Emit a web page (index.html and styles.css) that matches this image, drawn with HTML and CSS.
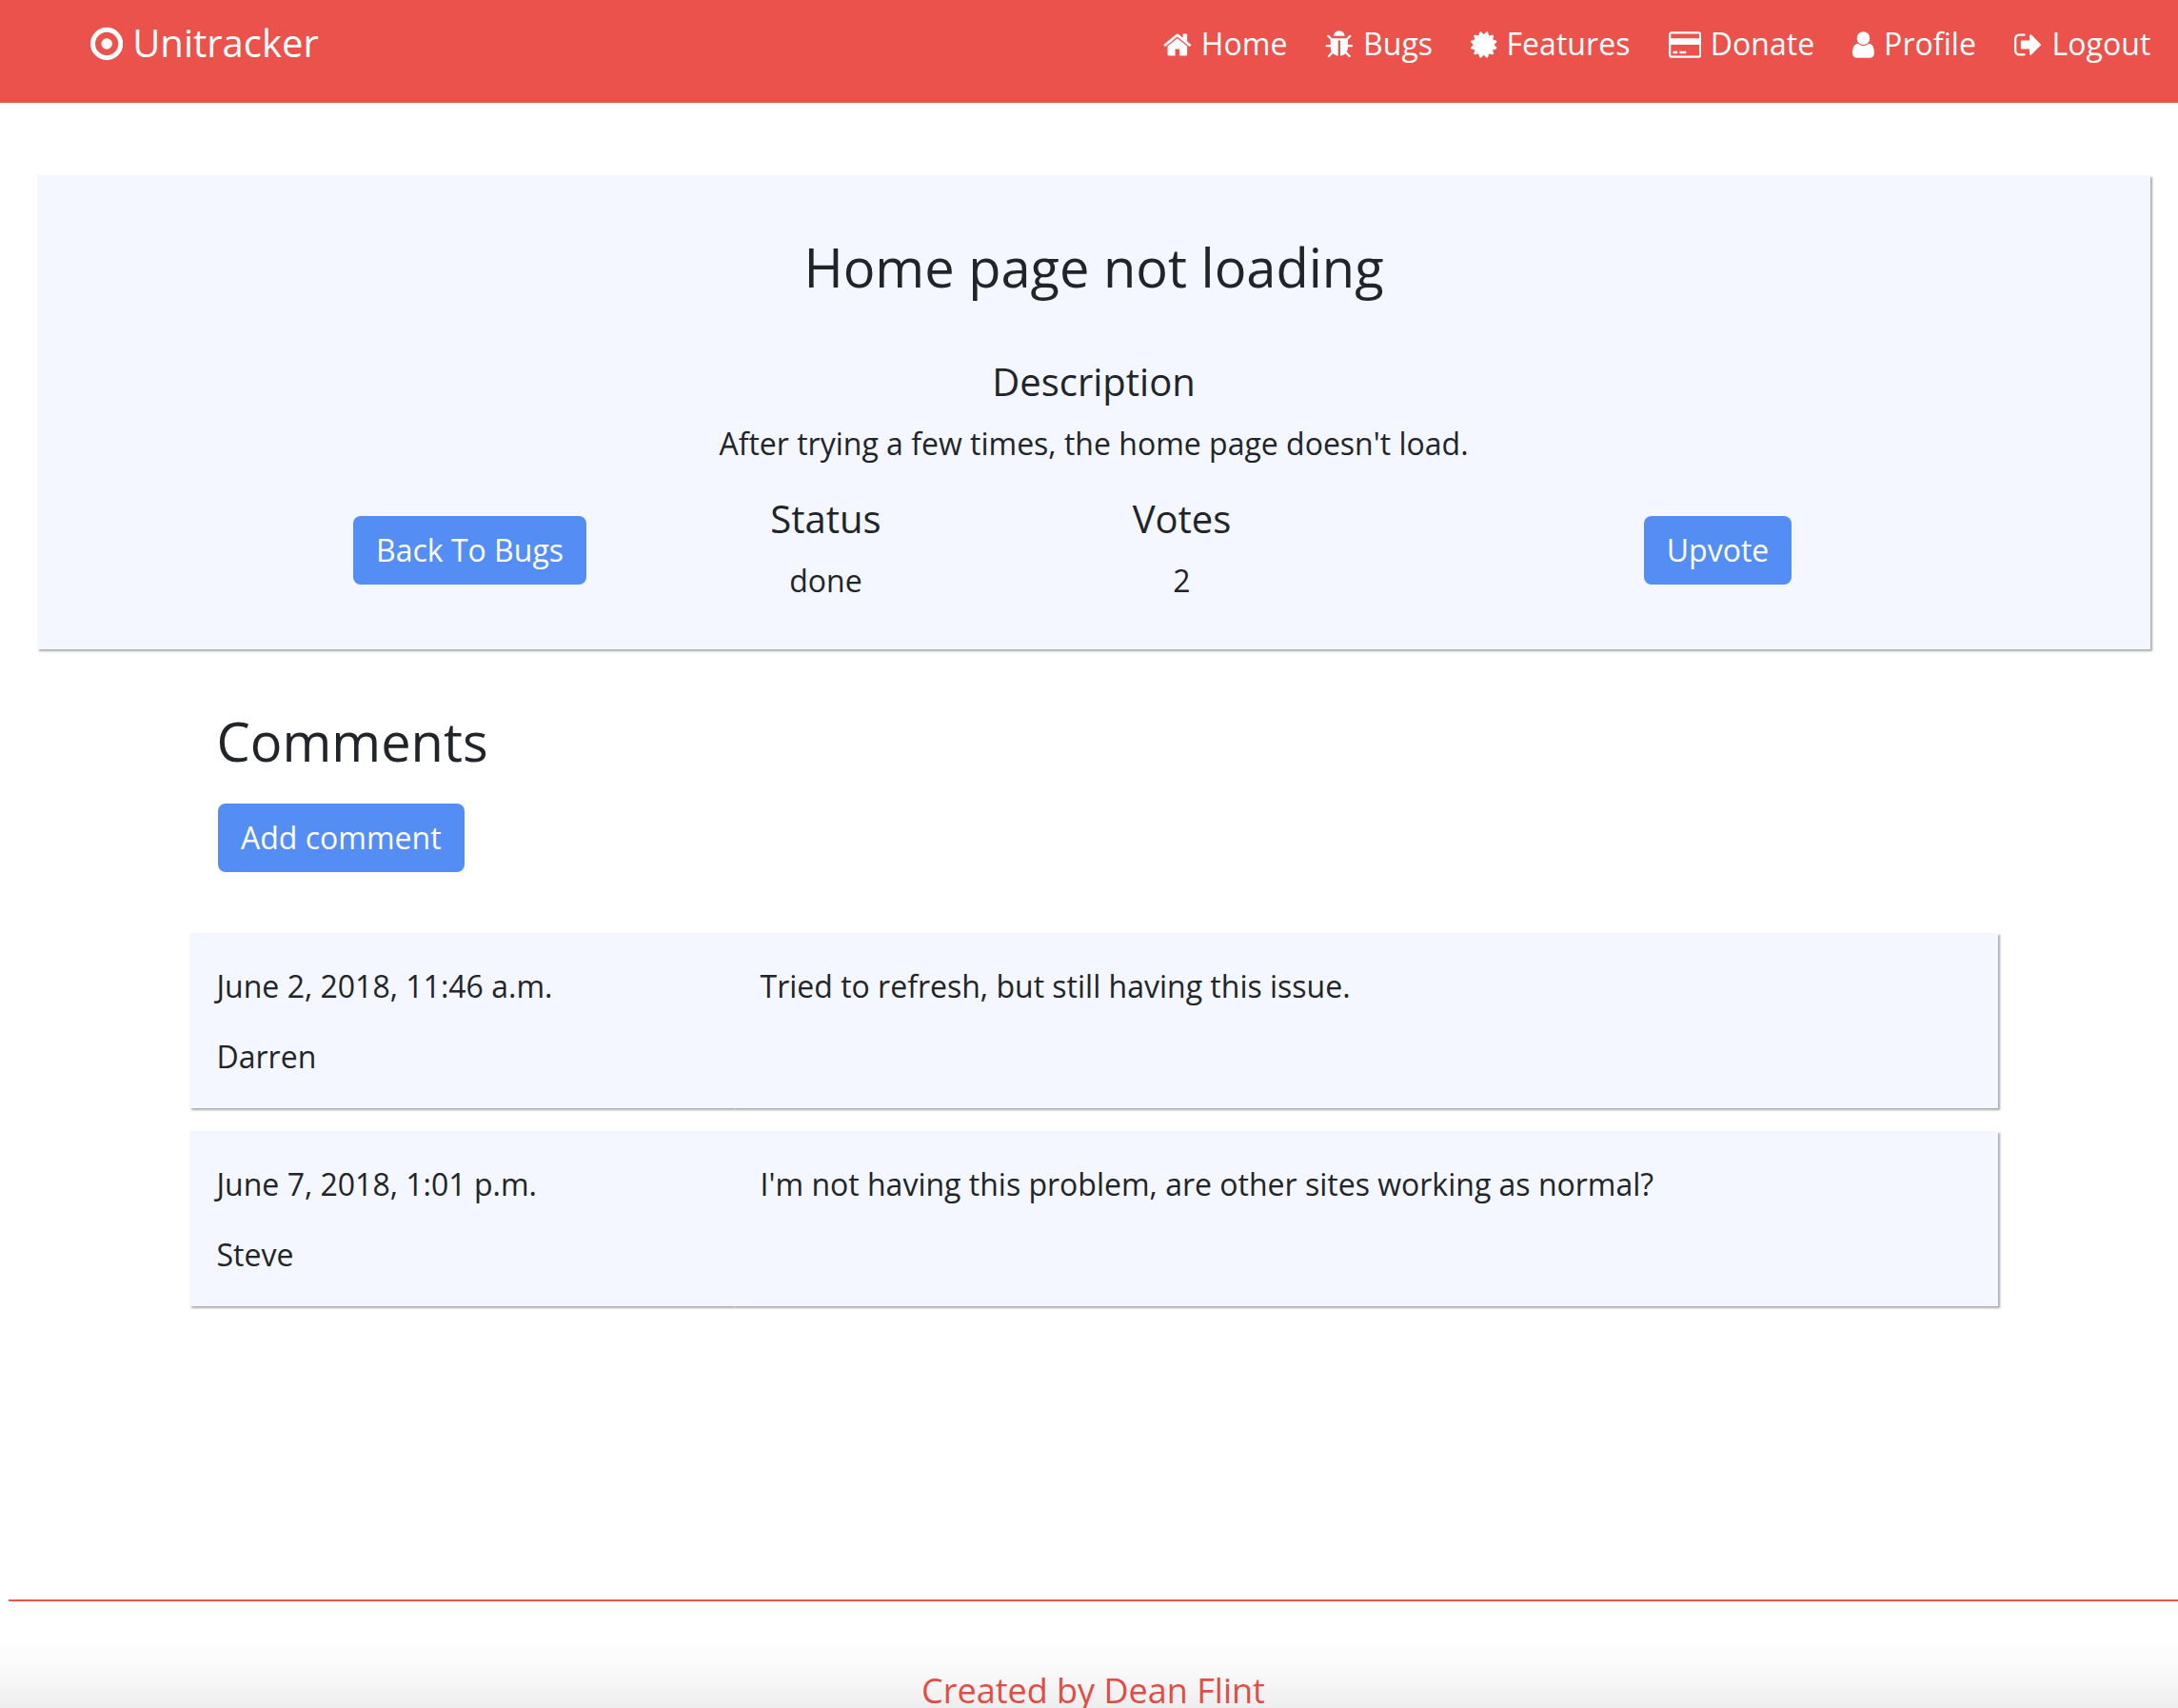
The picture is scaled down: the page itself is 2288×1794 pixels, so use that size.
FILE: index.html
```html
<!DOCTYPE html>
<html lang="en">
<head>
<meta charset="utf-8">
<title>Unitracker</title>
<link rel="stylesheet" href="styles.css">
</head>
<body>
<header class="navbar">
  <a class="brand"><svg class="icon" viewBox="128 0 1536 1792" width="34.3" height="40"><circle cx="896" cy="896" r="656" fill="none" stroke="currentColor" stroke-width="224"/><circle cx="896" cy="896" r="256"/></svg> Unitracker</a>
  <nav class="links">
    <a><svg class="icon" viewBox="64 0 1664 1792" width="29.7" height="32"><path d="M1472 992v480q0 26-19 45t-45 19h-384v-384h-256v384h-384q-26 0-45-19t-19-45v-480q0-1 .5-3t.5-3l575-474 575 474q1 2 1 6zm223-69l-62 74q-8 9-21 11h-3q-13 0-21-7l-692-577-692 577q-12 8-24 7-13-2-21-11l-62-74q-8-10-7-23.5t11-21.5l719-599q32-26 76-26t76 26l244 204v-195q0-14 9-23t23-9h192q14 0 23 9t9 23v408l219 182q10 8 11 21.5t-7 23.5z"/></svg> Home</a>
    <a><svg class="icon" viewBox="64 0 1664 1792" width="29.7" height="32"><path d="M1696 960q0 26-19 45t-45 19h-224q0 171-67 290l208 209q19 19 19 45t-19 45q-18 19-45 19t-45-19l-198-197q-5 5-15 13t-42 28.5-65 36.5-82 29-97 13v-896h-128v896q-51 0-101.5-13.5t-87-33-66-39-43.5-32.5l-15-14-183 207q-20 21-48 21-24 0-43-16-19-18-20.5-44.5t15.5-46.5l202-227q-58-114-58-274h-224q-26 0-45-19t-19-45 19-45 45-19h224v-294l-173-173q-19-19-19-45t19-45 45-19 45 19l173 173h844l173-173q19-19 45-19t45 19 19 45-19 45l-173 173v294h224q26 0 45 19t19 45zm-480-576h-640q0-133 93.5-226.5t226.5-93.5 226.5 93.5 93.5 226.5z"/></svg> Bugs</a>
    <a><svg class="icon" viewBox="128 0 1536 1792" width="27.4" height="32"><path d="M1504 896l138 135q30 28 20 70-12 41-52 51l-188 48 53 186q12 41-19 70-29 31-70 19l-186-53-48 188q-10 40-51 52-12 2-19 2-31 0-51-22l-135-138-135 138q-28 30-70 20-41-11-51-52l-48-188-186 53q-41 12-70-19-31-29-19-70l53-186-188-48q-40-10-52-51-10-42 20-70l138-135-138-135q-30-28-20-70 12-41 52-51l188-48-53-186q-12-41 19-70 29-31 70-19l186 53 48-188q10-41 51-51 41-12 70 19l135 139 135-139q29-30 70-19 41 10 51 51l48 188 186-53q41-12 70 19 31 29 19 70l-53 186 188 48q40 10 52 51 10 42-20 70z"/></svg> Features</a>
    <a><svg class="icon" viewBox="0 0 1920 1792" width="34.3" height="32"><path d="M1760 128q66 0 113 47t47 113v1216q0 66-47 113t-113 47h-1600q-66 0-113-47t-47-113v-1216q0-66 47-113t113-47h1600zm-1600 128q-13 0-22.500 9.500t-9.500 22.500v224h1664v-224q0-13-9.500-22.500t-22.500-9.500h-1600zm1600 1280q13 0 22.500-9.500t9.500-22.500v-608h-1664v608q0 13 9.500 22.500t22.500 9.500h1600zm-1504-128v-128h256v128h-256zm384 0v-128h384v128h-384z"/></svg> Donate</a>
    <a><svg class="icon" viewBox="0 -128 1280 1792" width="22.9" height="32"><path d="M1280 1271q0 109-62.500 187t-150.500 78h-854q-88 0-150.500-78t-62.500-187q0-85 8.500-160.500t31.500-152 58.500-131 94-89 134.500-34.500q131 128 313 128t313-128q76 0 134.500 34.500t94 89 58.500 131 31.500 152 8.500 160.500zm-256-887q0 159-112.500 271.500t-271.500 112.500-271.500-112.500-112.500-271.500 112.500-271.500 271.500-112.500 271.500 112.500 112.500 271.500z"/></svg> Profile</a>
    <a><svg class="icon" viewBox="64 0 1664 1792" width="29.7" height="32"><path d="M704 1440q0 4 1 20t.5 26.500-3 23.500-10 19.500-20.500 6.500h-320q-119 0-203.500-84.500t-84.500-203.500v-704q0-119 84.500-203.500t203.500-84.500h320q13 0 22.500 9.500t9.500 22.500q0 4 1 20t.5 26.500-3 23.500-10 19.500-20.500 6.500h-320q-66 0-113 47t-47 113v704q0 66 47 113t113 47h312l11.500 1 11.500 3 8 5.500 7 9 2 13.500zm928-544q0 26-19 45l-544 544q-19 19-45 19t-45-19-19-45v-288h-448q-26 0-45-19t-19-45v-384q0-26 19-45t45-19h448v-288q0-26 19-45t45-19 45 19l544 544q19 19 19 45z"/></svg> Logout</a>
  </nav>
</header>
<main>
  <section class="bug">
    <h1 class="title">Home page not loading</h1>
    <h2 class="label">Description</h2>
    <p class="text">After trying a few times, the home page doesn't load.</p>
    <div class="facts">
      <div class="action"><a class="btn">Back To Bugs</a></div>
      <div><h2 class="label">Status</h2><p class="text">done</p></div>
      <div><h2 class="label">Votes</h2><p class="text">2</p></div>
      <div class="action"><a class="btn">Upvote</a></div>
    </div>
  </section>
  <section class="comments">
    <div class="comments-head">
      <h1 class="title">Comments</h1>
      <a class="btn">Add comment</a>
    </div>
    <article class="comment">
      <div class="meta"><p>June 2, 2018, 11:46 a.m.</p><p>Darren</p></div>
      <div class="body"><p>Tried to refresh, but still having this issue.</p></div>
    </article>
    <article class="comment">
      <div class="meta"><p>June 7, 2018, 1:01 p.m.</p><p>Steve</p></div>
      <div class="body"><p>I'm not having this problem, are other sites working as normal?</p></div>
    </article>
  </section>
</main>
<footer class="footer">Created by Dean Flint</footer>
<div class="fade"></div>
</body>
</html>
```
FILE: styles.css
```css
* { box-sizing: border-box; }
body {
  margin: 0;
  height: 1794px;
  overflow: hidden;
  background: #fff;
  color: #212529;
  font: 32px/48px "Open Sans", sans-serif;
}
h1, h2, p { margin: 0; font-weight: 400; }
.navbar {
  display: flex;
  justify-content: space-between;
  align-items: flex-start;
  height: 108px;
  padding: 15px 28.5px 0 94.5px;
  background: #ea524b;
  color: #fff;
}
.brand { font-size: 40px; line-height: 60px; }
.links { display: flex; gap: 40px; padding-top: 7px; letter-spacing: 0.06px; }
.links a, .brand { white-space: nowrap; }
.icon { fill: currentColor; vertical-align: -0.16em; }
.links .icon { margin-right: 1.5px; }
.bug {
  height: 498px;
  margin: 76px 29px 0 39px;
  padding-top: 63px;
  background: #f4f7ff;
  box-shadow: 2px 2px 2px #aaa;
  text-align: center;
}
.title { font-size: 56px; line-height: 67px; }
.bug .title { margin-bottom: 63px; }
.label { margin-bottom: 17px; font-size: 40px; line-height: 48px; }
.facts {
  display: grid;
  grid-template-columns: 374px 374px 374px 752px;
  margin: 31px 0 0 267.5px;
}
.action { padding-top: 21px; }
.btn {
  display: inline-block;
  padding: 12px 24px;
  border-radius: 8px;
  background: #548df4;
  color: #fff;
}
.comments { width: 1900px; margin: 63px 0 0 199px; }
.comments-head {
  display: flex;
  flex-direction: column;
  align-items: flex-start;
  gap: 32px;
  padding-left: 30px;
  margin-bottom: 64px;
}
.comments-head .title { margin-left: -1.5px; }
.comment {
  display: grid;
  grid-template-columns: 571px 1fr;
  height: 184px;
  margin-bottom: 24px;
}
.meta, .body {
  padding: 32px 28.5px 0;
  background: #f4f7ff;
  box-shadow: 2px 2px 2px #aaa;
}
.meta p + p { margin-top: 26px; }
.footer {
  margin: 308px 0 0 9px;
  padding-top: 67px;
  border-top: 2px solid #ea524b;
  color: #ea524b;
  font-size: 36px;
  line-height: 54px;
  text-align: center;
}
.fade {
  position: fixed;
  inset: auto 0 0 0;
  height: 80px;
  background: linear-gradient(rgba(0, 0, 0, 0), rgba(0, 0, 0, 0.018) 50%, rgba(0, 0, 0, 0.065));
}
```
